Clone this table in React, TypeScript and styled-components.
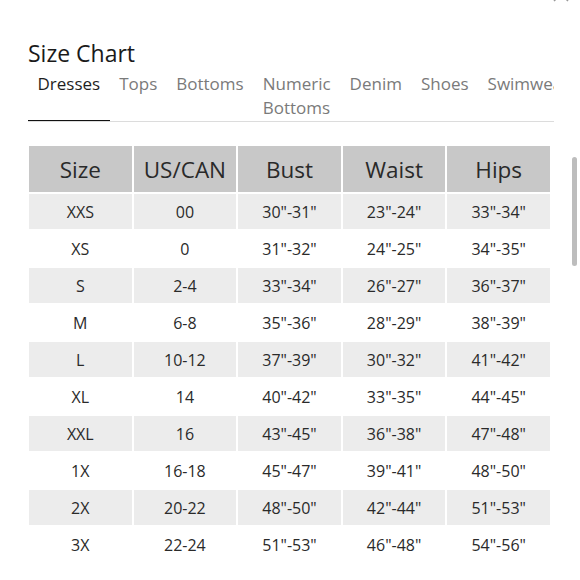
import styled, { createGlobalStyle } from "styled-components";

const GlobalStyle = createGlobalStyle`
  html, body {
    margin: 0;
    padding: 0;
    background: #ffffff;
  }
  body {
    font-family: "Open Sans", "Lato", "Liberation Sans", sans-serif;
    color: #222;
  }
`;

const tabs = ["Dresses", "Tops", "Bottoms", "Numeric Bottoms", "Denim", "Shoes", "Swimwear"];

const headers = ["Size", "US/CAN", "Bust", "Waist", "Hips"];

const rows = [
  ["XXS", "00", `30"-31"`, `23"-24"`, `33"-34"`],
  ["XS", "0", `31"-32"`, `24"-25"`, `34"-35"`],
  ["S", "2-4", `33"-34"`, `26"-27"`, `36"-37"`],
  ["M", "6-8", `35"-36"`, `28"-29"`, `38"-39"`],
  ["L", "10-12", `37"-39"`, `30"-32"`, `41"-42"`],
  ["XL", "14", `40"-42"`, `33"-35"`, `44"-45"`],
  ["XXL", "16", `43"-45"`, `36"-38"`, `47"-48"`],
  ["1X", "16-18", `45"-47"`, `39"-41"`, `48"-50"`],
  ["2X", "20-22", `48"-50"`, `42"-44"`, `51"-53"`],
  ["3X", "22-24", `51"-53"`, `46"-48"`, `54"-56"`],
];

export default function App() {
  return (
    <Page>
      <GlobalStyle />
      <CloseButton aria-label="close">
        <svg width="16" height="16" viewBox="0 0 16 16">
          <path d="M1 1 L15 15 M15 1 L1 15" stroke="#999" strokeWidth="1.5" fill="none" />
        </svg>
      </CloseButton>
      <Title>Size Chart</Title>
      <TabBar>
        {tabs.map((t, i) => (
          <Tab key={t} $active={i === 0}>{t}</Tab>
        ))}
      </TabBar>
      <Table>
        {headers.map((h) => (
          <HeadCell key={h}>{h}</HeadCell>
        ))}
        {rows.map((r, i) =>
          r.map((c, j) => (
            <Cell key={i + "-" + j} $shade={i % 2 === 0}>{c}</Cell>
          ))
        )}
      </Table>
      <ScrollThumb />
    </Page>
  );
}

const Page = styled.div`
  position: relative;
  width: 580px;
  height: 580px;
  overflow: hidden;
  box-sizing: border-box;
  padding: 39px 0 0 28px;
`;

const CloseButton = styled.div`
  position: absolute;
  top: -15px;
  left: 553px;
  width: 16px;
  height: 16px;
`;

const Title = styled.h1`
  margin: 0;
  font-size: 23px;
  line-height: 29px;
  font-weight: 400;
  color: #1a1a1a;
`;

const TabBar = styled.div`
  display: flex;
  align-items: stretch;
  width: 526px;
  margin-top: 4px;
  border-bottom: 1px solid #dcdcdc;
  overflow: hidden;
`;

const Tab = styled.div<{ $active?: boolean }>`
  flex: none;
  width: min-content;
  padding: 0 9.5px;
  font-size: 17px;
  line-height: 24px;
  color: ${(p) => (p.$active ? "#1e1e1e" : "#7a7a7a")};
  border-bottom: 2px solid ${(p) => (p.$active ? "#111" : "transparent")};
  margin-bottom: -1px;
`;

const Table = styled.div`
  display: grid;
  grid-template-columns: repeat(5, 1fr);
  grid-template-rows: 46px;
  grid-auto-rows: 35px;
  gap: 2px;
  width: 521px;
  margin: 24px 0 0 1px;
`;

const HeadCell = styled.div`
  display: flex;
  align-items: center;
  justify-content: center;
  background: #c8c8c8;
  color: #2a2a2a;
  font-size: 22.5px;
`;

const Cell = styled.div<{ $shade?: boolean }>`
  display: flex;
  align-items: center;
  justify-content: center;
  background: ${(p) => (p.$shade ? "#ececec" : "#ffffff")};
  color: #2a2a2a;
  font-size: 16px;
`;

const ScrollThumb = styled.div`
  position: absolute;
  left: 572px;
  top: 157px;
  width: 5px;
  height: 109px;
  border-radius: 3px;
  background: #bdbdbd;
`;
